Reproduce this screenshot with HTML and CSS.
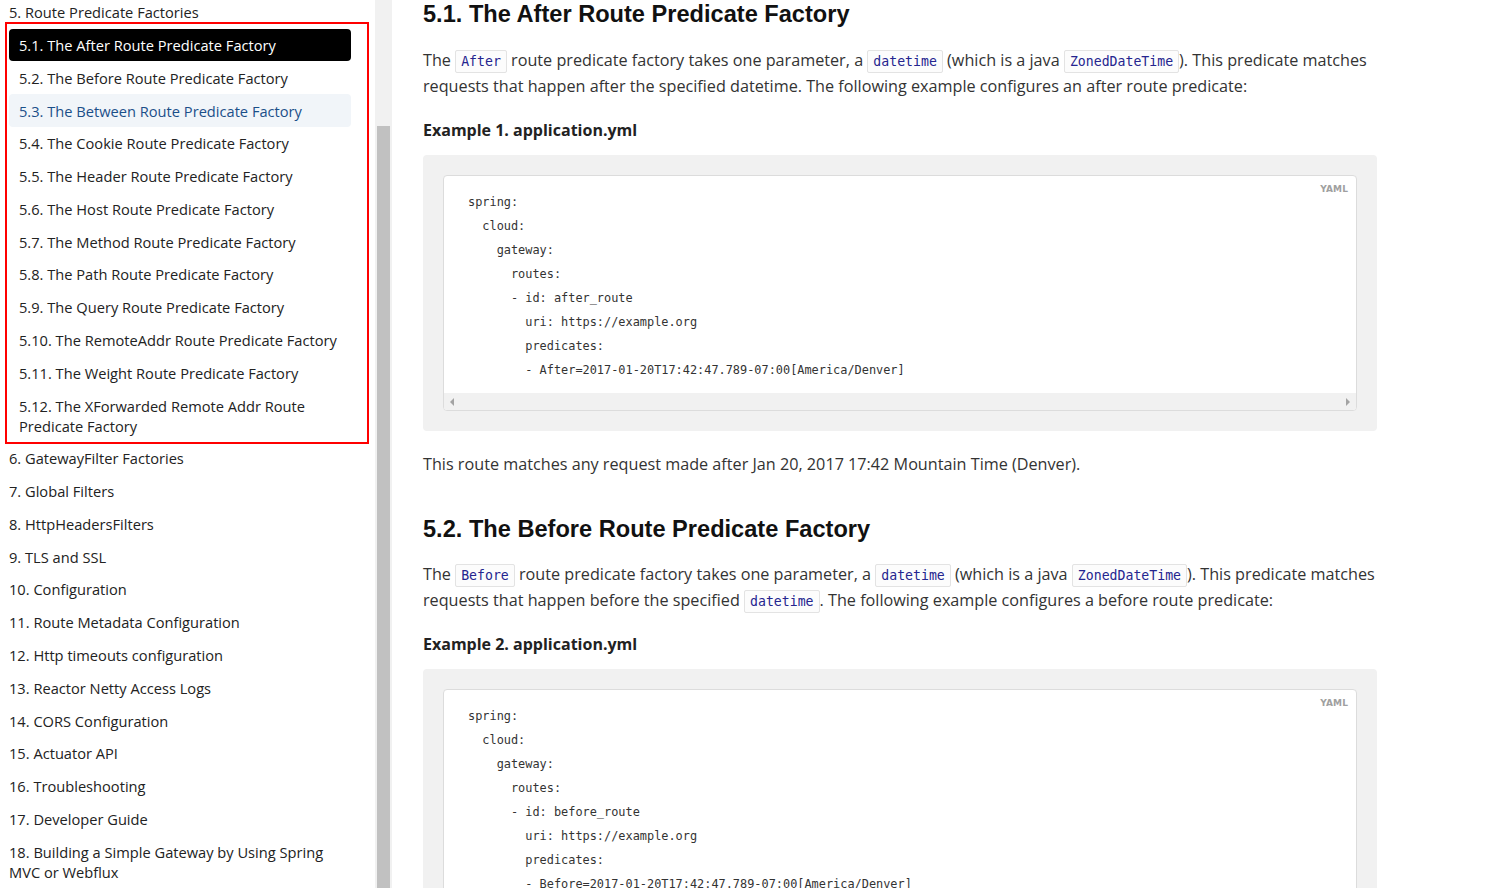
FILE: index.html
```html
<!DOCTYPE html>
<html lang="en">
<head>
<meta charset="utf-8">
<title>Spring Cloud Gateway - Route Predicate Factories</title>
<link rel="stylesheet" href="styles.css">
</head>
<body>
<div class="page">
  <aside class="sidebar">
    <nav class="toc">
      <ul class="toc-list">
        <li class="toc-item">
          <a class="toc-link top first">5. Route Predicate Factories</a>
          <ul class="toc-sub">
            <li><a class="toc-link sub active">5.1. The After Route Predicate Factory</a></li>
            <li><a class="toc-link sub">5.2. The Before Route Predicate Factory</a></li>
            <li><a class="toc-link sub hover">5.3. The Between Route Predicate Factory</a></li>
            <li><a class="toc-link sub">5.4. The Cookie Route Predicate Factory</a></li>
            <li><a class="toc-link sub">5.5. The Header Route Predicate Factory</a></li>
            <li><a class="toc-link sub">5.6. The Host Route Predicate Factory</a></li>
            <li><a class="toc-link sub">5.7. The Method Route Predicate Factory</a></li>
            <li><a class="toc-link sub">5.8. The Path Route Predicate Factory</a></li>
            <li><a class="toc-link sub">5.9. The Query Route Predicate Factory</a></li>
            <li><a class="toc-link sub">5.10. The RemoteAddr Route Predicate Factory</a></li>
            <li><a class="toc-link sub">5.11. The Weight Route Predicate Factory</a></li>
            <li><a class="toc-link sub">5.12. The XForwarded Remote Addr Route Predicate Factory</a></li>
          </ul>
        </li>
        <li class="toc-item"><a class="toc-link top">6. GatewayFilter Factories</a></li>
        <li class="toc-item"><a class="toc-link top">7. Global Filters</a></li>
        <li class="toc-item"><a class="toc-link top">8. HttpHeadersFilters</a></li>
        <li class="toc-item"><a class="toc-link top">9. TLS and SSL</a></li>
        <li class="toc-item"><a class="toc-link top">10. Configuration</a></li>
        <li class="toc-item"><a class="toc-link top">11. Route Metadata Configuration</a></li>
        <li class="toc-item"><a class="toc-link top">12. Http timeouts configuration</a></li>
        <li class="toc-item"><a class="toc-link top">13. Reactor Netty Access Logs</a></li>
        <li class="toc-item"><a class="toc-link top">14. CORS Configuration</a></li>
        <li class="toc-item"><a class="toc-link top">15. Actuator API</a></li>
        <li class="toc-item"><a class="toc-link top">16. Troubleshooting</a></li>
        <li class="toc-item"><a class="toc-link top">17. Developer Guide</a></li>
        <li class="toc-item"><a class="toc-link top">18. Building a Simple Gateway by Using Spring MVC or Webflux</a></li>
      </ul>
    </nav>
    <div class="vscroll"><div class="vthumb"></div></div>
  </aside>

  <main class="content">
    <section class="sect">
      <h3 class="sect-title first">5.1. The After Route Predicate Factory</h3>
      <p class="para">The <code class="ic">After</code> route predicate factory takes one parameter, a <code class="ic">datetime</code> (which is a java <code class="ic">ZonedDateTime</code>). This predicate matches requests that happen after the specified datetime. The following example configures an after route predicate:</p>
      <div class="example-title">Example 1. application.yml</div>
      <div class="listing">
        <div class="code-box">
          <span class="lang">YAML</span>
          <pre class="code">spring:
  cloud:
    gateway:
      routes:
      - id: after_route
        uri: https://example.org
        predicates:
        - After=2017-01-20T17:42:47.789-07:00[America/Denver]</pre>
          <div class="hscroll"><span class="arrow left"></span><span class="arrow right"></span></div>
        </div>
      </div>
      <p class="para after">This route matches any request made after Jan 20, 2017 17:42 Mountain Time (Denver).</p>
    </section>

    <section class="sect">
      <h3 class="sect-title">5.2. The Before Route Predicate Factory</h3>
      <p class="para">The <code class="ic">Before</code> route predicate factory takes one parameter, a <code class="ic">datetime</code> (which is a java <code class="ic">ZonedDateTime</code>). This predicate matches requests that happen before the specified <code class="ic">datetime</code>. The following example configures a before route predicate:</p>
      <div class="example-title">Example 2. application.yml</div>
      <div class="listing">
        <div class="code-box">
          <span class="lang">YAML</span>
          <pre class="code">spring:
  cloud:
    gateway:
      routes:
      - id: before_route
        uri: https://example.org
        predicates:
        - Before=2017-01-20T17:42:47.789-07:00[America/Denver]</pre>
          <div class="hscroll"><span class="arrow left"></span><span class="arrow right"></span></div>
        </div>
      </div>
    </section>
  </main>
</div>
</body>
</html>
```
FILE: styles.css
```css
html, body {
  margin: 0;
  padding: 0;
  height: 100%;
  overflow: hidden;
  background: #fff;
}

.page {
  display: flex;
  height: 888px;
  overflow: hidden;
}

/* ---------- sidebar ---------- */
.sidebar {
  display: flex;
  flex: 0 0 392px;
  height: 888px;
  overflow: hidden;
}

.toc {
  flex: 0 0 375px;
  overflow: hidden;
  font-family: "Open Sans", "Liberation Sans", sans-serif;
  font-size: 14.65px;
  line-height: 20px;
  color: #222;
}

.toc-list {
  list-style: none;
  margin: -4px 0 0 0;
  padding: 0;
}

.toc-sub {
  list-style: none;
  margin: 0 6px -2px 5px;
  padding: 4.2px 16px 0 2px;
  border: 2px solid #f00;
}

.toc-link {
  display: block;
  text-decoration: none;
  color: #222;
  padding: 6.4px 4px 6.4px 10px;
  border-radius: 4px;
}

.toc-link.top {
  padding-left: 9px;
  margin-right: 24px;
}

.toc-link.top.first {
  padding-bottom: 0;
}

.toc-link.sub {
  padding-left: 10px;
}

.toc-link.active {
  background: #000;
  color: #fff;
}

.toc-link.hover {
  background: #f1f5f9;
  color: #1b4f89;
}

.vscroll {
  flex: 0 0 17px;
  display: flex;
  flex-direction: column;
  background: #f1f1f1;
  padding: 126px 2px 0 2px;
  box-sizing: border-box;
}

.vthumb {
  flex: 1;
  background: #c1c1c1;
}

/* ---------- content ---------- */
.content {
  flex: 1;
  padding: 0 0 0 31px;
  overflow: hidden;
  font-family: "Open Sans", "Liberation Sans", sans-serif;
  color: #333;
}

.sect {
  width: 954px;
}

.sect-title {
  font-family: "Liberation Sans", Arial, sans-serif;
  font-weight: bold;
  font-size: 23.6px;
  line-height: 28px;
  color: #111;
  margin: 38px 0 18px 0;
}

.sect-title.first {
  margin-top: 0;
  margin-bottom: 19px;
}

.para {
  font-size: 16.2px;
  line-height: 26px;
  margin: 0 -14px 0 0;
}

.para.after {
  margin-top: 20px;
}

.ic {
  font-family: "DejaVu Sans Mono", "Liberation Mono", monospace;
  font-size: 13.2px;
  line-height: 14px;
  color: #25258f;
  background: #fcfcfc;
  border: 1px solid #e3e3e3;
  padding: 3px 5px;
  border-radius: 2px;
}

.example-title {
  font-weight: bold;
  font-size: 16px;
  line-height: 22px;
  color: #222;
  margin: 20px 0 14px 0;
}

.listing {
  background: #f1f1f1;
  border-radius: 4px;
  padding: 20px;
}

.code-box {
  position: relative;
  background: #fff;
  border: 1px solid #dcdcdc;
  border-radius: 4px;
  overflow: hidden;
}

.lang {
  position: absolute;
  top: 8px;
  right: 8px;
  font-family: "DejaVu Sans", "Liberation Sans", sans-serif;
  font-size: 9px;
  font-weight: bold;
  color: #a0a0a0;
  letter-spacing: 0.1px;
}

.code {
  margin: 0;
  padding: 14px 24px 11px 24px;
  font-family: "DejaVu Sans Mono", "Liberation Mono", monospace;
  font-size: 11.9px;
  line-height: 24px;
  color: #333;
  white-space: pre;
}

.hscroll {
  display: flex;
  justify-content: space-between;
  align-items: center;
  height: 17px;
  background: #f1f1f1;
  padding: 0 6px 0 6px;
}

.arrow {
  width: 0;
  height: 0;
  border-top: 4px solid transparent;
  border-bottom: 4px solid transparent;
}

.arrow.left {
  border-right: 4px solid #a3a3a3;
}

.arrow.right {
  border-left: 4px solid #a3a3a3;
}
```
